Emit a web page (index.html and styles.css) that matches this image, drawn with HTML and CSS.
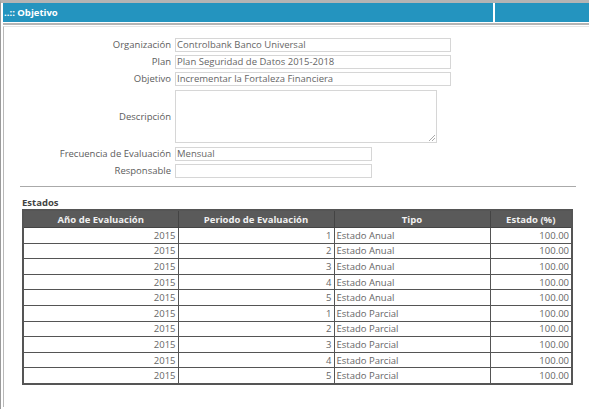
FILE: index.html
```html
<!DOCTYPE html>
<html>
<head>
<meta charset="utf-8">
<link rel="stylesheet" href="styles.css">
</head>
<body>
<div class="page">
  <div class="header">
    <div class="h-main">..:: Objetivo</div>
    <div class="h-side"></div>
  </div>
  <div class="sep"></div>
  <div class="content">
    <div class="form">
      <label class="lbl">Organización</label><div class="fld w1">Controlbank Banco Universal</div>
      <label class="lbl">Plan</label><div class="fld w1">Plan Seguridad de Datos 2015-2018</div>
      <label class="lbl">Objetivo</label><div class="fld w1">Incrementar la Fortaleza Financiera</div>
      <label class="lbl lbl-mid">Descripción</label><div class="fld area"><span class="grip"></span></div>
      <label class="lbl">Frecuencia de Evaluación</label><div class="fld w2">Mensual</div>
      <label class="lbl">Responsable</label><div class="fld w2"></div>
    </div>
    <div class="rule"></div>
    <div class="section">
      <div class="title">Estados</div>
      <table class="grid">
        <colgroup><col class="c1"><col class="c2"><col class="c3"><col class="c4"></colgroup>
        <thead>
          <tr><th>Año de Evaluación</th><th>Periodo de Evaluación</th><th>Tipo</th><th>Estado (%)</th></tr>
        </thead>
        <tbody>
          <tr><td class="r">2015</td><td class="r">1</td><td>Estado Anual</td><td class="r">100.00</td></tr>
          <tr><td class="r">2015</td><td class="r">2</td><td>Estado Anual</td><td class="r">100.00</td></tr>
          <tr><td class="r">2015</td><td class="r">3</td><td>Estado Anual</td><td class="r">100.00</td></tr>
          <tr><td class="r">2015</td><td class="r">4</td><td>Estado Anual</td><td class="r">100.00</td></tr>
          <tr><td class="r">2015</td><td class="r">5</td><td>Estado Anual</td><td class="r">100.00</td></tr>
          <tr><td class="r">2015</td><td class="r">1</td><td>Estado Parcial</td><td class="r">100.00</td></tr>
          <tr><td class="r">2015</td><td class="r">2</td><td>Estado Parcial</td><td class="r">100.00</td></tr>
          <tr><td class="r">2015</td><td class="r">3</td><td>Estado Parcial</td><td class="r">100.00</td></tr>
          <tr><td class="r">2015</td><td class="r">4</td><td>Estado Parcial</td><td class="r">100.00</td></tr>
          <tr><td class="r">2015</td><td class="r">5</td><td>Estado Parcial</td><td class="r">100.00</td></tr>
        </tbody>
      </table>
    </div>
  </div>
</div>
</body>
</html>
```
FILE: styles.css
```css
html, body { margin: 0; padding: 0; background: #fff; }
body { font-family: "Open Sans", "DejaVu Sans", sans-serif; font-size: 9.5px; color: #5c5c5c; }
.page { border-top: 3px solid #b4b4b4; border-left: 1px solid #9a9a9a; padding-left: 2px; height: 406px; }
.header { display: flex; gap: 2px; height: 19px; }
.h-main { width: 490px; background: #2494bf; color: #fff; font-weight: bold; font-size: 9.5px; line-height: 19px; padding-left: 1px; box-sizing: border-box; }
.h-side { flex: 1; background: #2494bf; }
.sep { height: 2px; background: #b4b4b4; margin-top: 1px; }
.content { margin-top: 1px; border-left: 1px solid #b8b8b8; border-top: 1px solid #e6e6e6; height: 380px; }
.form { display: grid; grid-template-columns: 167px auto; column-gap: 4px; row-gap: 3px; padding-top: 11px; justify-items: start; }
.lbl { justify-self: end; line-height: 14px; color: #5c5c5c; }
.lbl-mid { align-self: center; }
.fld { box-sizing: border-box; height: 14px; border: 1px solid #d6d6d6; line-height: 12px; padding-left: 1px; color: #666; }
.w1 { width: 276px; }
.w2 { width: 197px; }
.area { position: relative; width: 262px; height: 53px; margin-top: 1px; margin-bottom: 1px; }
.grip { position: absolute; right: 1px; bottom: 1px; width: 6px; height: 6px; background: linear-gradient(135deg, transparent 45%, #aaa 45%, #aaa 55%, transparent 55%, transparent 70%, #aaa 70%, #aaa 80%, transparent 80%); }
.rule { height: 1px; background: #aaa; margin: 8px 13px 0 16px; }
.section { padding-left: 18px; padding-top: 10px; }
.title { font-weight: bold; color: #444; line-height: 12px; margin-bottom: 0; }
.grid { border-collapse: collapse; table-layout: fixed; width: 551px; border: 2px solid #555; }
.grid th { background: #5a5a5a; color: #f0f0f0; font-weight: bold; height: 16px; padding: 0; border: 1px solid #444; border-left-color: #888; }
.grid td { height: 14.6px; padding: 0 2px; border: 1px solid #555; line-height: 13px; color: #666; white-space: nowrap; overflow: hidden; }
.c1 { width: 155px; }
.c2, .c3 { width: 156px; }
.r { text-align: right; }
```
